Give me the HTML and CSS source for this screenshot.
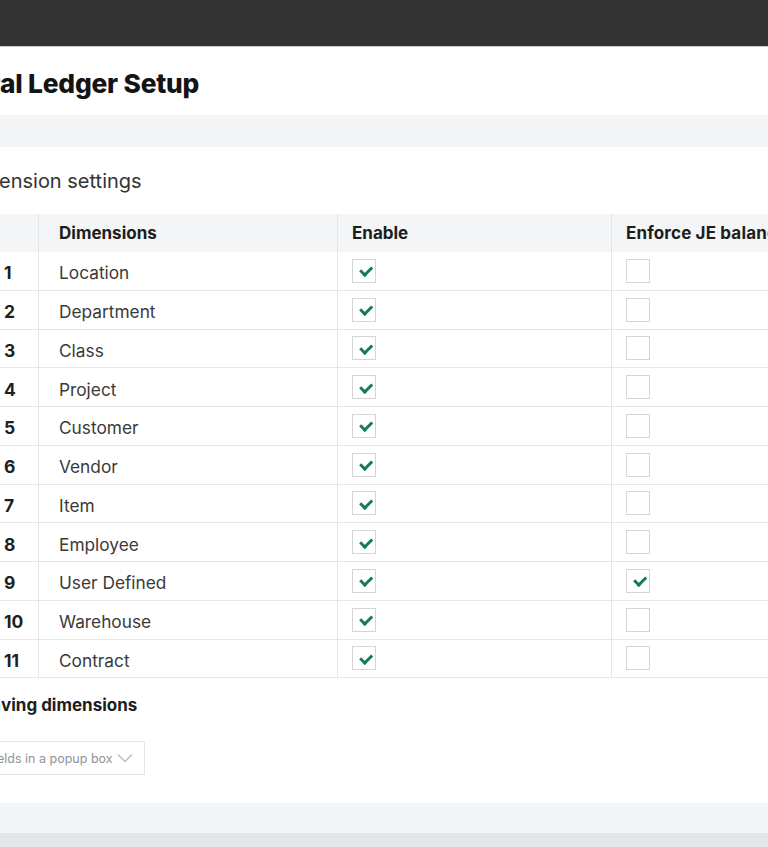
FILE: index.html
```html
<!DOCTYPE html>
<html>
<head>
<meta charset="utf-8">
<link rel="stylesheet" href="styles.css">
</head>
<body>
<div class="page">
  <div class="topbar"></div>
  <header class="head">
    <h1 class="title"><span class="cut"><span>Gener</span></span>al Ledger Setup</h1>
  </header>
  <div class="band"></div>
  <main class="content">
    <h2 class="sect"><span class="cut"><span>Dim</span></span>ension settings</h2>
    <div class="table">
      <div class="row hdr">
        <div class="c num"></div>
        <div class="c name">Dimensions</div>
        <div class="c en">Enable</div>
        <div class="c jb">Enforce JE balance</div>
      </div>
      <div class="row"><div class="c num">1</div><div class="c name">Location</div><div class="c en"><span class="cb on"></span></div><div class="c jb"><span class="cb"></span></div></div>
      <div class="row"><div class="c num">2</div><div class="c name">Department</div><div class="c en"><span class="cb on"></span></div><div class="c jb"><span class="cb"></span></div></div>
      <div class="row"><div class="c num">3</div><div class="c name">Class</div><div class="c en"><span class="cb on"></span></div><div class="c jb"><span class="cb"></span></div></div>
      <div class="row"><div class="c num">4</div><div class="c name">Project</div><div class="c en"><span class="cb on"></span></div><div class="c jb"><span class="cb"></span></div></div>
      <div class="row"><div class="c num">5</div><div class="c name">Customer</div><div class="c en"><span class="cb on"></span></div><div class="c jb"><span class="cb"></span></div></div>
      <div class="row"><div class="c num">6</div><div class="c name">Vendor</div><div class="c en"><span class="cb on"></span></div><div class="c jb"><span class="cb"></span></div></div>
      <div class="row"><div class="c num">7</div><div class="c name">Item</div><div class="c en"><span class="cb on"></span></div><div class="c jb"><span class="cb"></span></div></div>
      <div class="row"><div class="c num">8</div><div class="c name">Employee</div><div class="c en"><span class="cb on"></span></div><div class="c jb"><span class="cb"></span></div></div>
      <div class="row"><div class="c num">9</div><div class="c name">User Defined</div><div class="c en"><span class="cb on"></span></div><div class="c jb"><span class="cb on"></span></div></div>
      <div class="row"><div class="c num">10</div><div class="c name">Warehouse</div><div class="c en"><span class="cb on"></span></div><div class="c jb"><span class="cb"></span></div></div>
      <div class="row"><div class="c num">11</div><div class="c name">Contract</div><div class="c en"><span class="cb on"></span></div><div class="c jb"><span class="cb"></span></div></div>
    </div>
    <h3 class="sub"><span class="cut"><span>Sa</span></span>ving dimensions</h3>
    <div class="select">
      <span class="seltext"><span class="cut"><span>Show dimension fi</span></span>elds in a popup box</span>
      <svg class="chev" width="16" height="10" viewBox="0 0 16 10"><path d="M1 1.5l7 7 7-7" fill="none" stroke="#b9bec4" stroke-width="1.4"/></svg>
    </div>
  </main>
  <div class="footband"></div>
  <div class="footgrey"></div>
</div>
</body>
</html>
```
FILE: styles.css
```css
* { box-sizing: border-box; margin: 0; padding: 0; }
html, body { width: 768px; height: 847px; overflow: hidden; }
body { font-family: Inter, "Noto Sans", sans-serif; color: #2d2d2d; background: #fff; }
.page { display: flex; flex-direction: column; height: 847px; }
.topbar { height: 47px; background: #333333; border-bottom: 1px solid #c9c9c9; flex: none; }
.head { height: 68px; flex: none; padding-top: 21px; }
.title { font-size: 26.3px; font-weight: 800; color: #141414; line-height: 32px; letter-spacing: -0.2px; }
.cut { display: inline-flex; width: 0; justify-content: flex-end; white-space: nowrap; }
.band { height: 32px; flex: none; background: #f2f4f6; }
.content { flex: 1; display: flex; flex-direction: column; }
.sect { font-size: 20px; font-weight: 400; color: #333; line-height: 24px; margin-top: 22px; margin-left: -1px; }
.table { margin-top: 21px; width: 820px; }
.row { display: flex; height: 38.75px; border-bottom: 1px solid #e5e7e9; align-items: stretch; }
.row.hdr { height: 38px; background: #f3f5f7; border-bottom: none; font-weight: 700; color: #1d1d1d; }
.c { display: flex; align-items: center; font-size: 17.3px; }
.num { width: 39px; border-right: 1px solid #e3e5e7; padding-left: 4px; padding-top: 4px; font-weight: 700; color: #1f1f1f; font-size: 17.5px; }
.name { width: 299px; border-right: 1px solid #e3e5e7; padding-left: 20px; padding-top: 4px; color: #3a3a3a; }
.hdr .name { color: #1d1d1d; font-size: 17px; padding-top: 0; }
.en { width: 274px; border-right: 1px solid #e3e5e7; padding-left: 14px; }
.jb { flex: 1; padding-left: 14px; white-space: nowrap; }
.hdr .c { padding-top: 0; font-size: 17px; }
.hdr .jb { letter-spacing: 0.15px; }
.cb { width: 24px; height: 24px; border: 1px solid #d3d5d8; background: #fff; display: inline-block; position: relative; }
.cb.on::after { content: ""; position: absolute; left: 6.5px; top: 6.5px; width: 9px; height: 4.5px; border-left: 3px solid #167a54; border-bottom: 3px solid #167a54; transform: rotate(-45deg); transform-origin: center; }
.sub { font-size: 17px; font-weight: 700; color: #1d1d1d; line-height: 22px; margin-top: 16px; margin-left: 1px; }
.select { margin-top: 25px; width: 145px; height: 34px; border: 1px solid #e2e4e6; border-left: none; display: flex; align-items: center; justify-content: space-between; padding-right: 11px; }
.seltext { font-size: 12.5px; color: #909396; white-space: nowrap; margin-left: -3px; }
.chev { flex: none; }
.footband { height: 30px; flex: none; background: #f2f5f7; }
.footgrey { height: 14px; flex: none; background: #e4e5e6; }
```
